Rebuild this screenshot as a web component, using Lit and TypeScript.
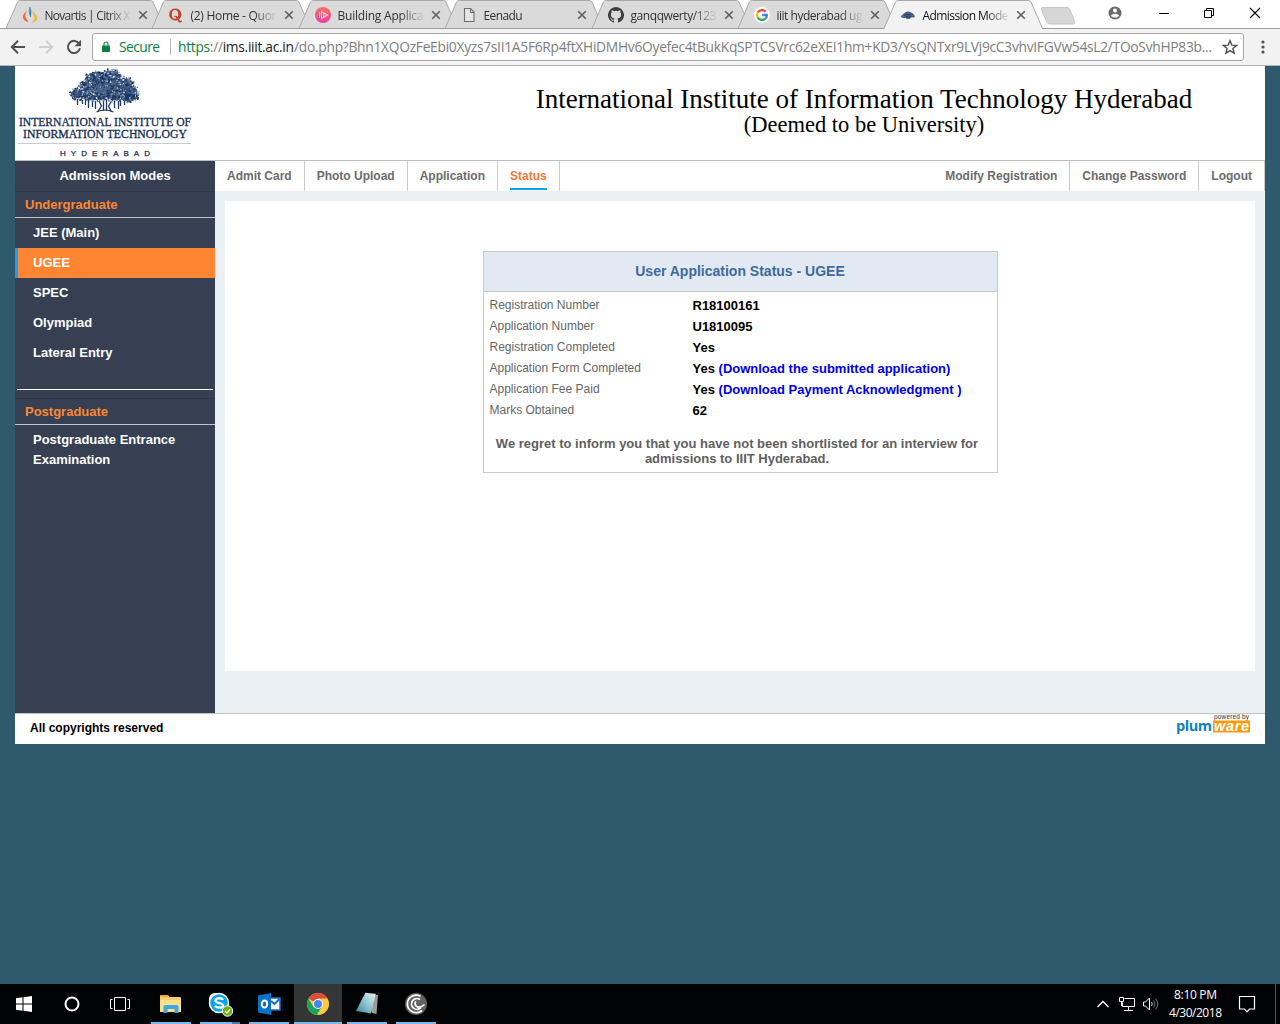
import { LitElement, html, css, svg } from "lit";
import { customElement, property } from "lit/decorators.js";

const favicons: Record<string, unknown> = {
  citrix: svg`<path d="M4.500 3c.8 2-2 4.500-1 7 .6 1.500 2.500 2.500 2.500 5-3-.6-5.500-3-5-6 .5-2.500 3-3.500 3.500-6z" fill="#ef6a3a"/><path d="M7.800 0c1.500 3 1.500 6 .8 10-1.500-3-1.800-7-.8-10z" fill="#2d8bb5" stroke="#2d8bb5" stroke-width=".5"/><path d="M11 2.500c-.8 3 4.500 5 4.200 8.500-.2 2.500-2 4-5 4.500 0-2 2.500-2.500 2.300-4.500-.2-2.500-3-4.500-1.500-8.500z" fill="#f3b63f"/>`,
  quora: svg`<path fill-rule="evenodd" d="M7 1.500a6 6 0 1 0 2.500 11.500l1.200 2.200c.7.9 3.300.6 3.300-1.700h-.9c-.1.700-.8.800-1.200.1l-.8-1.400A6 6 0 0 0 7 1.500zm0 1.400c2.300 0 3.200 1.800 3.200 4.600 0 1.200-.1 2-.4 2.700-.8-1.200-2.200-1.700-3.800-1.200l.3.900c1-.2 1.700.6 2.200 1.700-2.900.9-4.700-.7-4.700-4.100 0-2.800.9-4.600 3.200-4.600z" fill="#c0452f"/>`,
  building: svg`<defs><linearGradient id="pk" x1="0" y1="0" x2="0" y2="1"><stop offset="0" stop-color="#f3735c"/><stop offset="1" stop-color="#f03ba5"/></linearGradient></defs><circle cx="8" cy="8" r="8" fill="url(#pk)"/><path d="M4.500 5v6M6.500 4.500v7l6-3.500zM8.800 5.900v4.200" fill="none" stroke="#fbd5dc" stroke-width="1.100"/>`,
  page: svg`<path d="M3.500 1.500h6l3.500 3.500v9.500h-9.500zM9.500 1.500v4h3.500" fill="#e6e6e6" stroke="#6e6e6e" stroke-width="1.100"/>`,
  github: svg`<path fill="#3f3f3f" d="M8 0a8 8 0 0 0-2.530 15.590c.4.070.55-.17.55-.38v-1.490c-2.230.49-2.700-.94-2.700-.94-.36-.93-.89-1.170-.89-1.170-.73-.5.050-.49.050-.49.800.06 1.230.83 1.230.83.710 1.220 1.870.87 2.330.66.070-.52.280-.87.510-1.070-1.780-.2-3.640-.89-3.640-3.950 0-.87.310-1.590.82-2.150-.08-.2-.36-1.020.08-2.120 0 0 .67-.21 2.200.82a7.600 7.600 0 0 1 4 0c1.530-1.040 2.200-.82 2.200-.82.440 1.100.160 1.920.08 2.120.51.560.82 1.270.82 2.150 0 3.070-1.870 3.750-3.650 3.950.29.250.54.730.54 1.480v2.190c0 .21.150.46.550.38A8 8 0 0 0 8 0z"/>`,
  google: svg`<circle cx="8" cy="8" r="8" fill="#fff"/><g fill="none" stroke-width="2.300"><path d="M11.600 4.600A5 5 0 0 0 3.700 5.500" stroke="#ea4335"/><path d="M3.700 5.500a5 5 0 0 0 0 5" stroke="#fbbc05"/><path d="M3.700 10.500a5 5 0 0 0 7.600 1.200" stroke="#34a853"/><path d="M11.300 11.700A5 5 0 0 0 13 8H8.200" stroke="#4285f4"/></g>`,
  iiit: svg`<path d="M.8 10C1.500 7.500 3 7.500 4.500 6c2-2 5-2 6.500-.5 1.500.8 3.500 1.500 4 4.500-1.500 1-3 .2-4.500.7l-1 1.300h-3l-.5-1.300c-2 .4-3.700.2-5.200-.7z" fill="#4c6283"/><path d="M4 8.500l2-1 2 .6 3-1.200M6 10h5" stroke="#243b60" fill="none"/>`,
};

@customElement("browser-tab")
class BrowserTab extends LitElement {
  @property() icon = "page";
  @property() label = "";
  @property({ type: Number }) length = 80;
  @property({ type: Boolean, reflect: true }) active = false;

  static styles = css`
    :host { display: block; position: relative; width: 146.4px; height: 29px; flex: none; }
    :host([active]) { z-index: 2; }
    .shape { position: absolute; left: 0; top: 0; overflow: visible; }
    .body { position: relative; display: flex; align-items: center; height: 29px; padding-left: 15px; }
    .icon { width: 16px; height: 16px; flex: none; }
    .label { width: 88px; height: 20px; margin-left: 6px; flex: none;
      -webkit-mask-image: linear-gradient(90deg, #000 72%, transparent 100%); mask-image: linear-gradient(90deg, #000 72%, transparent 100%); }
    .label text { font: 12px "Open Sans", "Noto Sans", sans-serif; fill: #333; }
    :host([active]) .label text { fill: #111; }
    .close { width: 10px; height: 10px; margin-left: 6px; flex: none; }
  `;

  render() {
    const fill = this.active ? "#f2f2f2" : "#dadada";
    return html`
      <svg class="shape" width="158" height="29">
        <path d="M-1 28.500 L10.500 2 Q11.500 .5 13.500 .5 H143 Q145 .5 146 2 L157.500 28.500" fill=${fill} stroke="#a9a9a9"></path>
        ${this.active ? svg`<path d="M-.5 28.500H157" stroke="#f2f2f2" stroke-width="1.200"/>` : svg`<path d="M-1 28.500H158" stroke="#9d9d9d"/>`}
      </svg>
      <div class="body">
        <svg class="icon" viewBox="0 0 16 16">${favicons[this.icon]}</svg>
        <svg class="label"><text x="0.500" y="14.500" textLength=${this.length}>${this.label}</text></svg>
        <svg class="close" viewBox="0 0 10 10"><path d="M1.200 1.200l7.600 7.600M8.800 1.200l-7.600 7.600" stroke="#5f5f5f" stroke-width="1.600"></path></svg>
      </div>`;
  }
}

@customElement("browser-chrome")
class BrowserChrome extends LitElement {
  static styles = css`
    :host { display: block; height: 66px; background: #f2f2f2; box-sizing: border-box; border-bottom: 1px solid #b4b4b4; }
    .strip { display: flex; height: 29px; background: linear-gradient(#9d9d9d, #9d9d9d) bottom / 100% 1px no-repeat #fff; padding-left: 7px; }
    .newtab { width: 36px; height: 18px; margin: 7px 0 0 8.200px; flex: none; position: relative; z-index: 3; }
    .window { display: flex; margin-left: auto; padding-right: 17px; }
    .window svg { width: 16px; height: 16px; margin-top: 5px; }
    .person { margin-right: 33px; }
    .mini { margin-right: 29px; }
    .restore { margin-right: 30px; }
    .bar { display: flex; align-items: center; height: 36px; box-sizing: border-box; padding: 0 10px; }
    .nav { width: 16px; height: 16px; margin-right: 12px; flex: none; }
    .nav.reload { margin-right: 10px; }
    .omni { display: flex; align-items: center; width: 1152px; height: 28px; box-sizing: border-box; border: 1px solid #a6a6a6; border-radius: 3px; background: #fff; flex: none; }
    .lock { width: 8px; height: 12px; margin-left: 9px; }
    .url { width: 1100px; height: 26px; margin-left: 8px; }
    .url text { font: 13.800px "Open Sans", "Noto Sans", sans-serif; fill: #7d7d7d; }
    .url .green { fill: #0b8043; }
    .url .dark { fill: #1a1a1a; }
    .star { width: 16px; height: 16px; margin-left: 4px; }
    .menu { width: 4px; height: 14px; margin-left: 17px; }
  `;

  render() {
    return html`
      <div class="strip">
        <browser-tab icon="citrix" label="Novartis | Citrix X" length="86"></browser-tab>
        <browser-tab icon="quora" label="(2) Home - Quor" length="86"></browser-tab>
        <browser-tab icon="building" label="Building Applica" length="86"></browser-tab>
        <browser-tab icon="page" label="Eenadu" length="39"></browser-tab>
        <browser-tab icon="github" label="ganqqwerty/123" length="86"></browser-tab>
        <browser-tab icon="google" label="iiit hyderabad ug" length="86"></browser-tab>
        <browser-tab icon="iiit" label="Admission Mode" length="86" active></browser-tab>
        <svg class="newtab" viewBox="0 0 36 18"><path d="M3 .5h24q2 0 3 2l4.500 12q.8 2.500-1 2.500H9.500q-2 0-2.800-2L1.500 2.500Q.8.500 3 .5z" fill="#d6d6d6" stroke="#c6c6c6"></path></svg>
        <div class="window">
          <svg class="person" viewBox="0 0 16 16"><circle cx="8" cy="8" r="6.500" fill="#6a6a6a"></circle><circle cx="8" cy="5.600" r="2" fill="#fff"></circle><path d="M4 10.700c1-2.500 7-2.500 8 0-1.700 2.500-6.300 2.500-8 0z" fill="#fff"></path></svg>
          <svg class="mini" viewBox="0 0 16 16"><path d="M3 8.500h10" stroke="#000"></path></svg>
          <svg class="restore" viewBox="0 0 16 16"><path d="M3.500 5.500h7v7h-7zM5.500 5.500v-2h7v7h-2" fill="none" stroke="#000"></path></svg>
          <svg viewBox="0 0 16 16"><path d="M3 3l10 10M13 3L3 13" stroke="#000" stroke-width="1.100"></path></svg>
        </div>
      </div>
      <div class="bar">
        <svg class="nav" viewBox="0 0 16 16"><path d="M15 8H2.500M8 1.800L1.800 8 8 14.200" fill="none" stroke="#505050" stroke-width="2"></path></svg>
        <svg class="nav" viewBox="0 0 16 16"><path d="M1 8h12.500M8 1.800L14.200 8 8 14.200" fill="none" stroke="#d0d0d0" stroke-width="2"></path></svg>
        <svg class="nav reload" viewBox="0 0 16 16"><path d="M13.200 4.700A6.100 6.100 0 1 0 14 9.300" fill="none" stroke="#505050" stroke-width="2"></path><path d="M15 .8v6.400H8.600z" fill="#505050"></path></svg>
        <div class="omni">
          <svg class="lock" viewBox="0 0 8 12"><path d="M.8 4.500h6.400q.8 0 .8.800v5q0 .8-.8.800H.8q-.8 0-.8-.8v-5q0-.8.8-.8z" fill="#0b8043"></path><path d="M2 5V3a2 2 0 0 1 4 0v2" fill="none" stroke="#0b8043" stroke-width="1.200"></path></svg>
          <svg class="url" viewBox="0 0 1100 26">
            <text class="green" x="1" y="18" textLength="41">Secure</text>
            <path d="M52.500 5v16" stroke="#b5b5b5"></path>
            <text x="60" y="18" textLength="116"><tspan class="green">https</tspan>://<tspan class="dark">ims.iiit.ac.in</tspan></text>
            <text x="176" y="18" textLength="918">/do.php?Bhn1XQOzFeEbi0Xyzs7sII1A5F6Rp4ftXHiDMHv6Oyefec4tBukKqSPTCSVrc62eXEI1hm+KD3/YsQNTxr9LVj9cC3vhvIFGVw54sL2/TOoSvhHP83b...</text>
          </svg>
          <svg class="star" viewBox="0 0 16 16"><path d="M8 1.600l1.800 4.500 4.800.3-3.700 3.100 1.200 4.700L8 11.600l-4.100 2.600 1.200-4.700L1.400 6.400l4.800-.3z" fill="none" stroke="#505050" stroke-width="1.400"></path></svg>
        </div>
        <svg class="menu" viewBox="0 0 4 14"><g fill="#505050"><circle cx="2" cy="2" r="1.600"></circle><circle cx="2" cy="7" r="1.600"></circle><circle cx="2" cy="12" r="1.600"></circle></g></svg>
      </div>`;
  }
}

/* Leaf clusters are scattered over a canopy outline by a fixed-seed generator. */
function leaves() {
  let seed = 41;
  const rnd = () => (seed = (seed * 16807) % 2147483647) / 2147483647;
  const lobes = [
    [30, 10, 13, 8], [43, 8, 12, 7], [54, 16, 14, 8], [63, 24, 9, 8], [61, 30, 10, 5],
    [11, 26, 10, 6], [20, 18, 10, 8], [38, 19, 20, 10], [48, 28, 14, 6], [26, 29, 14, 5],
  ];
  const out: unknown[] = lobes.map(([x, y, a, b]) => svg`<ellipse cx=${x} cy=${y} rx=${a - 2} ry=${b - 1.500} fill="#4c6389"/>`);
  const tints = ["#173563", "#1c3b69", "#2b4873", "#e4e8ef", "#173563", "#8a9bb5", "#0f2c59"];
  for (let i = 0; i < 900; i++) {
    const [x, y, a, b] = lobes[i % lobes.length];
    const t = rnd() * Math.PI * 2;
    const d = Math.sqrt(rnd());
    out.push(svg`<circle cx=${(x + Math.cos(t) * d * a).toFixed(1)} cy=${(y + Math.sin(t) * d * b).toFixed(1)} r=${(0.35 + rnd() * 0.7).toFixed(2)} fill=${tints[Math.floor(rnd() * 7)]}/>`);
  }
  return out;
}

@customElement("institute-logo")
class InstituteLogo extends LitElement {
  static styles = css`
    :host { display: block; width: 200px; height: 94px; }
    .name { font: 12px "Liberation Serif", serif; fill: #152c52; stroke: #152c52; stroke-width: .3px; }
    .city { font: 8px "Liberation Sans", sans-serif; fill: #152c52; stroke: #152c52; stroke-width: .25px; }
  `;
  render() {
    return html`<svg width="200" height="94" viewBox="0 0 200 94">
      <g transform="translate(52.500 2)">
        <path d="M30 44l4-6-4-8M44 44l-3-6 6-9M36 43v-14M39 43V28M10 31v6M15 32v4M18 31v6M21 32v8M25 33v6M28 33v8M47 33v7M51 33v8M53 33v5M57 32v5M60 31v3" fill="none" stroke="#1d3a66" stroke-width="1.300"></path>
        ${leaves()}
        <path d="M29 44q8-4 17 0" fill="none" stroke="#1d3a66" stroke-width="1.200"></path>
      </g>
      <text class="name" x="4" y="59.500" textLength="172" lengthAdjust="spacingAndGlyphs">INTERNATIONAL INSTITUTE OF</text>
      <text class="name" x="8" y="72" textLength="164" lengthAdjust="spacingAndGlyphs">INFORMATION TECHNOLOGY</text>
      <path d="M3 77.500h173" stroke="#c9ccd0"></path>
      <text class="city" x="45" y="89.500" textLength="90">HYDERABAD</text>
    </svg>`;
  }
}

@customElement("side-menu")
class SideMenu extends LitElement {
  static styles = css`
    :host { display: block; width: 200px; flex: none; background: #364052; color: #fff; font-weight: bold; font-size: 13px; line-height: 20px; }
    .title { height: 30px; line-height: 29px; text-align: center; }
    .section { height: 27px; box-sizing: border-box; border-top: 1px solid #2e3747; border-bottom: 1px solid #c3c6cb; padding-left: 10px; line-height: 25px; color: #fc8732; }
    .item { height: 30px; padding-left: 18px; line-height: 29px; }
    .item.current { background: #fe8632; border-left: 3px solid #1ba0f2; padding-left: 15px; }
    .rule { height: 1px; background: #fff; margin: 21px 2px 8px; }
    .long { padding: 5px 18px; }
  `;
  render() {
    return html`
      <div class="title">Admission Modes</div>
      <div class="section">Undergraduate</div>
      ${["JEE (Main)", "UGEE", "SPEC", "Olympiad", "Lateral Entry"].map(
        (t) => html`<div class="item ${t === "UGEE" ? "current" : ""}">${t}</div>`
      )}
      <div class="rule"></div>
      <div class="section">Postgraduate</div>
      <div class="long">Postgraduate Entrance Examination</div>`;
  }
}

@customElement("status-card")
class StatusCard extends LitElement {
  static styles = css`
    :host { display: block; width: 515px; height: 222px; box-sizing: border-box; border: 1px solid #c9c9c9; }
    .head { height: 39px; background: #e3e9f3; border-bottom: 1px solid #c9c9c9; color: #40699c; font-size: 14px; font-weight: bold; text-align: center; line-height: 39px; padding-right: 1px; }
    .rows { padding: 3px 0 0 5.500px; }
    .row { display: grid; grid-template-columns: 203px 1fr; height: 21px; line-height: 21px; font-size: 12px; color: #666; }
    .value { font-size: 13px; font-weight: bold; color: #000; }
    .link { color: #0000e8; }
    .note { margin: 15px 12px 0 5px; font-size: 13px; line-height: 15px; font-weight: bold; color: #5f5f5f; text-align: center; }
  `;
  render() {
    const rows = [
      ["Registration Number", "R18100161", ""],
      ["Application Number", "U1810095", ""],
      ["Registration Completed", "Yes", ""],
      ["Application Form Completed", "Yes", "(Download the submitted application)"],
      ["Application Fee Paid", "Yes", "(Download Payment Acknowledgment )"],
      ["Marks Obtained", "62", ""],
    ];
    return html`
      <div class="head">User Application Status - UGEE</div>
      <div class="rows">
        ${rows.map(([k, v, l]) => html`<div class="row"><span>${k}</span><span class="value">${v} <span class="link">${l}</span></span></div>`)}
      </div>
      <div class="note">We regret to inform you that you have not been shortlisted for an interview for<br />admissions to IIIT Hyderabad.</div>`;
  }
}

@customElement("task-bar")
class TaskBar extends LitElement {
  static styles = css`
    :host { display: flex; height: 40px; background: #020304; color: #fff; }
    .app { width: 48px; height: 40px; box-sizing: border-box; display: flex; align-items: center; justify-content: center; flex: none; }
    .open { width: 40px; margin: 0 4.500px; border-bottom: 2px solid #76b9ed; padding-top: 2px; }
    .chrome { width: 48px; margin: 0 0.500px; background: #343535; }
    .skype { border-image: linear-gradient(90deg, #76b9ed 78%, #4b7ba0 78%) 1; border-width: 0 0 2px; border-style: solid; }
    .first { margin-left: 7px; }
    .app svg { width: 26px; height: 26px; }
    .tray { display: flex; align-items: center; margin-left: auto; }
    .tray svg { height: 20px; flex: none; }
    .network { margin-left: 8px; }
    .sound { margin-left: 6px; }
    .notes { margin-left: 4px; }
    .tray .clock { width: 74px; height: 40px; }
    .clock text { font: 12px "Open Sans", "Noto Sans", sans-serif; fill: #fff; }
    .edge { width: 1px; height: 40px; background: #555; margin: 0 4px 0 19px; }
  `;
  render() {
    return html`
      <div class="app"><svg viewBox="0 0 26 26"><path d="M5 7.300l6.500-1v6.200H5zM12.500 6.200L21 5v7.500h-8.500zM5 13.500h6.500v6.200l-6.500-1zM12.500 13.500H21V21l-8.500-1.200z" fill="#fff"></path></svg></div>
      <div class="app"><svg viewBox="0 0 26 26"><circle cx="13" cy="13" r="6.500" fill="none" stroke="#fff" stroke-width="2"></circle></svg></div>
      <div class="app"><svg viewBox="0 0 26 26"><path d="M7.500 6.500h11v13h-11zM5.500 8.500h-2v9h2M20.500 8.500h2v9h-2" fill="none" stroke="#fff"></path></svg></div>
      <div class="app open first"><svg viewBox="0 0 26 26"><path d="M2 5q0-1 1-1h7l1.500 2H22q1 0 1 1v14H2z" fill="#f5cd69"></path><path d="M3 5h7" stroke="#e39d1e" stroke-width="1.500"></path><path d="M2 9h21v12H2z" fill="#fbdf8d"></path><path d="M5.500 22v-6q0-2 2-2h11q2 0 2 2v6h-4v-4h-7v4z" fill="#3fa9dc"></path></svg></div>
      <div class="app open skype"><svg viewBox="0 0 26 26"><circle cx="8" cy="8" r="6" fill="#fff"></circle><circle cx="16" cy="16" r="6" fill="#fff"></circle><circle cx="12" cy="12" r="9.500" fill="#0aa5e2" stroke="#fff" stroke-width="1.500"></circle><path d="M16 8.800c-1-2-7.500-2.300-7.500.7 0 3.300 7.500 1.700 7.500 5 0 3-6.500 2.800-8 .3" fill="none" stroke="#fff" stroke-width="2.300"></path><circle cx="20.500" cy="20" r="5.200" fill="#6bb300" stroke="#fff"></circle><path d="M18 20l2 2 3.200-3.700" fill="none" stroke="#fff" stroke-width="1.300"></path></svg></div>
      <div class="app open"><svg viewBox="0 0 26 26"><path d="M13 7h11v12H13z" fill="#fff" stroke="#0b70c8" stroke-width="1.500"></path><path d="M15 10l3.500 3 5-5" fill="none" stroke="#0b70c8" stroke-width="2"></path><path d="M2 4.500L15 2v22L2 21.500z" fill="#0872c6"></path><ellipse cx="8.500" cy="13" rx="2.700" ry="3.500" fill="none" stroke="#fff" stroke-width="1.900"></ellipse></svg></div>
      <div class="app open chrome"><svg viewBox="0 0 26 26"><circle cx="13" cy="13" r="11" fill="#fcca3f"></circle><path d="M13 13L3.500 7.500A11 11 0 0 1 22.500 7.500H13z" fill="#dd4b3e"></path><path d="M3.500 7.500A11 11 0 0 0 12 24l5-8.700-8.700.2z" fill="#1da462"></path><circle cx="13" cy="13" r="5" fill="#fff"></circle><circle cx="13" cy="13" r="4" fill="#4688f1"></circle></svg></div>
      <div class="app open"><svg viewBox="0 0 26 26"><defs><linearGradient id="np" x1="1" y1="0" x2="0" y2="1"><stop offset="0" stop-color="#e2f1f3"></stop><stop offset=".5" stop-color="#8cc3d0"></stop><stop offset="1" stop-color="#3a8499"></stop></linearGradient></defs><path d="M12 2.500l12 1.500-1.500 19-4.500-1z" fill="#9b9d96"></path><path d="M11 2.500l10.500 1L17 22.500 2 20z" fill="url(#np)"></path><path d="M11 2.500l10.500 1" stroke="#d8d8d8" stroke-width="1.500"></path></svg></div>
      <div class="app open"><svg viewBox="0 0 26 26"><circle cx="13" cy="13" r="11" fill="#626262"></circle><path d="M17.500 5.300A8.800 8.800 0 1 0 19 19.500M17 8.500A5.400 5.400 0 1 0 18 16.500q-2 .8-3.500-.5M13 10.500q-2 2 0 4.500 4 3 8.500-1.500" fill="none" stroke="#fff" stroke-width="1.700"></path></svg></div>
      <div class="tray">
        <svg width="14" viewBox="0 0 14 20"><path d="M1.500 13L7 7.500l5.500 5.500" fill="none" stroke="#fff" stroke-width="1.300"></path></svg>
        <svg class="network" width="18" viewBox="0 0 18 20"><path d="M6.500 4.500h10v8H4.500v-4M10.500 12.500v4M6 16.500h9M1.500 3.500h4v4h-4zM3.500 8v4" fill="none" stroke="#fff"></path></svg>
        <svg class="sound" width="18" viewBox="0 0 18 20"><path d="M1.500 8h2l4-4v12l-4-4h-2z" fill="none" stroke="#fff"></path><path d="M9.500 8q1.500 2 0 4" fill="none" stroke="#ddd"></path><path d="M11.500 6.500q3 3.500 0 7M13.500 4.500q4.500 5.500 0 11" fill="none" stroke="#777"></path></svg>
        <svg class="clock"><text x="14" y="15" textLength="43">8:10 PM</text><text x="9" y="33" textLength="53">4/30/2018</text></svg>
        <svg class="notes" width="18" viewBox="0 0 18 20"><path d="M1.500 2.500h15v12.500h-5l-2.500 2.800L6.500 15h-5z" fill="none" stroke="#fff" stroke-width="1.200"></path></svg>
        <div class="edge"></div>
      </div>`;
  }
}

@customElement("app-root")
class AppRoot extends LitElement {
  static styles = css`
    :host { display: flex; flex-direction: column; width: 1280px; height: 1024px; overflow: hidden; background: #2f596c; font-family: "Liberation Sans", Arial, sans-serif; }
    .site { margin: 0 15px; background: #fff; }
    .banner { display: flex; height: 94px; border-bottom: 1px solid #bdbdbd; }
    .name { flex: 1; padding: 18px 1px 0 249px; text-align: center; font-family: "Liberation Serif", "Times New Roman", serif; color: #000; }
    .l1 { font-size: 27px; line-height: 30px; white-space: nowrap; }
    .l2 { font-size: 22.500px; line-height: 22px; }
    .main { display: flex; height: 552px; }
    .right { flex: 1; display: flex; flex-direction: column; background: #ebf0f4; }
    .nav { display: flex; height: 30px; background: #fff; font-size: 12px; font-weight: bold; color: #6c6c6c; line-height: 30px; }
    .nav span { padding: 0 12px; border-right: 1px solid #ccc; }
    .nav .on { color: #ee7a35; }
    .nav .on b { display: block; height: 27px; border-bottom: 2px solid #12a0f8; }
    .push { margin-left: auto; }
    .panel { margin: 10px; height: 470px; background: #fff; display: flex; justify-content: center; align-items: flex-start; padding: 50px 0 0 1px; box-sizing: border-box; }
    .footer { display: flex; justify-content: space-between; height: 30px; border-top: 1px solid #c4c4c4; font-size: 12px; font-weight: bold; line-height: 28px; padding: 0 14px 0 15px; }
    .by { font: 6.500px "Liberation Sans", sans-serif; fill: #333; }
    .plum { font: bold 14.500px "Open Sans", "Liberation Sans", sans-serif; fill: #0f80c0; }
    .ware { font: italic bold 14.500px "Liberation Sans", sans-serif; fill: #fff; }
    task-bar { margin-top: auto; }
  `;
  render() {
    return html`
      <browser-chrome></browser-chrome>
      <div class="site">
        <div class="banner">
          <institute-logo></institute-logo>
          <div class="name"><div class="l1">International Institute of Information Technology Hyderabad</div><div class="l2">(Deemed to be University)</div></div>
        </div>
        <div class="main">
          <side-menu></side-menu>
          <div class="right">
            <div class="nav">
              <span>Admit Card</span><span>Photo Upload</span><span>Application</span><span class="on"><b>Status</b></span>
              <span class="push">Modify Registration</span><span>Change Password</span><span>Logout</span>
            </div>
            <div class="panel"><status-card></status-card></div>
          </div>
        </div>
        <div class="footer">
          <div>All copyrights reserved</div>
          <svg width="76" height="30" viewBox="0 0 76 30">
            <text class="by" x="39" y="5" textLength="35">powered by</text>
            <text class="plum" x="1" y="16.500" textLength="36">plum</text>
            <path d="M38 6.500h37v12H38z" fill="#fb9a0c"></path>
            <text class="ware" x="39" y="16.500" textLength="35">ware</text>
          </svg>
        </div>
      </div>
      <task-bar></task-bar>`;
  }
}
